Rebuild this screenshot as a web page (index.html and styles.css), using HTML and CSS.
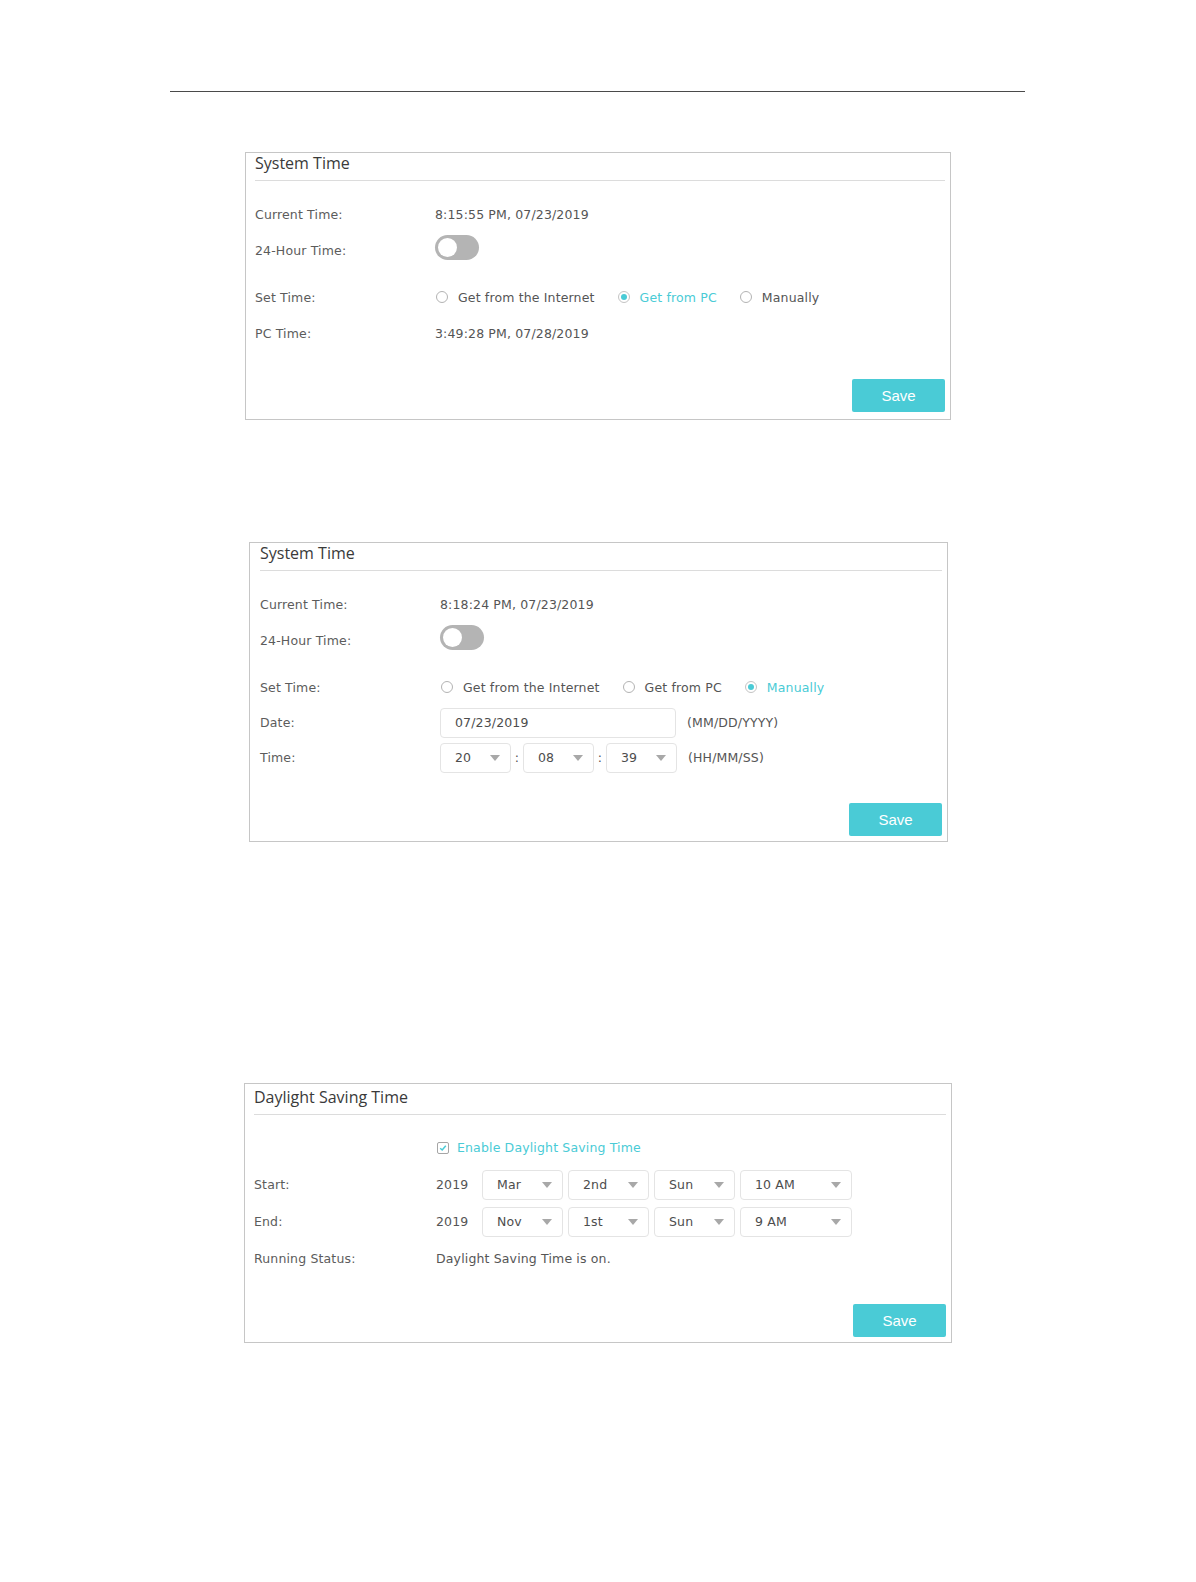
FILE: index.html
```html
<!DOCTYPE html>
<html lang="en">
<head>
  <meta charset="UTF-8">
  <meta name="viewport" content="width=device-width, initial-scale=1.0">
  <title>System Time</title>
  <link rel="stylesheet" href="styles.css">
</head>
<body>
  <div class="page">
    <hr class="page-rule">

    <!-- System Time: get from PC -->
    <section class="panel panel--pc">
      <h2 class="panel-title">System Time</h2>
      <div class="panel-body">
        <div class="row">
          <span class="label">Current Time:</span>
          <span class="value">8:15:55 PM, 07/23/2019</span>
        </div>
        <div class="row row--toggle">
          <span class="label">24-Hour Time:</span>
          <span class="toggle"><span class="knob"></span></span>
        </div>
        <div class="row">
          <span class="label">Set Time:</span>
          <div class="options">
            <span class="option"><span class="radio"></span>Get from the Internet</span>
            <span class="option is-on"><span class="radio"></span>Get from PC</span>
            <span class="option"><span class="radio"></span>Manually</span>
          </div>
        </div>
        <div class="row">
          <span class="label">PC Time:</span>
          <span class="value">3:49:28 PM, 07/28/2019</span>
        </div>
      </div>
      <div class="actions"><button class="btn-save">Save</button></div>
    </section>

    <!-- System Time: manually -->
    <section class="panel panel--manual">
      <h2 class="panel-title">System Time</h2>
      <div class="panel-body">
        <div class="row">
          <span class="label">Current Time:</span>
          <span class="value">8:18:24 PM, 07/23/2019</span>
        </div>
        <div class="row row--toggle">
          <span class="label">24-Hour Time:</span>
          <span class="toggle"><span class="knob"></span></span>
        </div>
        <div class="row">
          <span class="label">Set Time:</span>
          <div class="options">
            <span class="option"><span class="radio"></span>Get from the Internet</span>
            <span class="option"><span class="radio"></span>Get from PC</span>
            <span class="option is-on"><span class="radio"></span>Manually</span>
          </div>
        </div>
        <div class="row row--field">
          <span class="label">Date:</span>
          <span class="field field--date">07/23/2019</span>
          <span class="hint">(MM/DD/YYYY)</span>
        </div>
        <div class="row row--field">
          <span class="label">Time:</span>
          <span class="field select select--time">20</span>
          <span class="sep">:</span>
          <span class="field select select--time">08</span>
          <span class="sep">:</span>
          <span class="field select select--time">39</span>
          <span class="hint">(HH/MM/SS)</span>
        </div>
      </div>
      <div class="actions"><button class="btn-save">Save</button></div>
    </section>

    <!-- Daylight Saving Time -->
    <section class="panel panel--dst">
      <h2 class="panel-title">Daylight Saving Time</h2>
      <div class="panel-body">
        <div class="row">
          <span class="label"></span>
          <span class="option is-on">
            <span class="checkbox">
              <svg width="8" height="8" viewBox="0 0 8 8"><path d="M1.2 4.2 L3.2 6 L6.8 1.8" fill="none" stroke="#4acbd6" stroke-width="1.5"/></svg>
            </span>Enable Daylight Saving Time
          </span>
        </div>
        <div class="row">
          <span class="label">Start:</span>
          <span class="value year">2019</span>
          <div class="selects">
            <span class="field select">Mar</span>
            <span class="field select">2nd</span>
            <span class="field select">Sun</span>
            <span class="field select select--wide">10 AM</span>
          </div>
        </div>
        <div class="row">
          <span class="label">End:</span>
          <span class="value year">2019</span>
          <div class="selects">
            <span class="field select">Nov</span>
            <span class="field select">1st</span>
            <span class="field select">Sun</span>
            <span class="field select select--wide">9 AM</span>
          </div>
        </div>
        <div class="row">
          <span class="label">Running Status:</span>
          <span class="value">Daylight Saving Time is on.</span>
        </div>
      </div>
      <div class="actions"><button class="btn-save">Save</button></div>
    </section>
  </div>
</body>
</html>
```

FILE: styles.css
```css
body {
  margin: 0;
  padding: 0;
  background-color: #fff;
  font-family: "DejaVu Sans", sans-serif;
  font-size: 12.5px;
  letter-spacing: 0.15px;
  color: #555;
}
.page {
  width: 855px;
  margin-left: 170px;
  padding: 91px 0 240px;
}
.page-rule {
  margin: 0;
  border: none;
  border-top: 1px solid #4a4a4a;
}
.panel {
  box-sizing: border-box;
  border: 1px solid #c6c6c6;
  padding: 0 5px 7px 9px;
}
.panel--pc {
  margin: 60px 0 0 75px;
  width: 706px;
}
.panel--manual {
  margin: 122px 0 0 79px;
  width: 699px;
  padding-left: 10px;
  padding-bottom: 5px;
}
.panel--dst {
  margin: 241px 0 0 74px;
  width: 708px;
  padding-bottom: 5px;
}
.panel-title {
  margin: 0;
  padding-bottom: 7px;
  font-family: "Open Sans", sans-serif;
  font-size: 16px;
  font-weight: normal;
  letter-spacing: 0;
  line-height: 20px;
  color: #3a3a3a;
  border-bottom: 1px solid #dcdcdc;
}
.panel--dst .panel-title {
  padding-top: 3px;
}
.panel-body {
  padding-top: 15px;
}
.panel--dst .panel-body {
  padding-top: 14px;
}
.panel--dst .row {
  height: 37px;
}
.panel--dst .label {
  flex-basis: 182px;
}
.panel--dst .actions {
  margin-top: 27px;
}
.row {
  display: flex;
  align-items: center;
  height: 36px;
}
.row--toggle {
  margin-bottom: 11px;
}
.row--field {
  height: 35px;
}
.label {
  flex: 0 0 180px;
  color: #5c5c5c;
}
.value {
  color: #555;
}
.toggle {
  display: flex;
  align-items: center;
  box-sizing: border-box;
  width: 44px;
  height: 25px;
  padding-left: 3px;
  border-radius: 13px;
  background-color: #b4b4b4;
  margin-top: -6px;
}
.knob {
  width: 19px;
  height: 19px;
  border-radius: 50%;
  background-color: #fff;
}
.options {
  display: flex;
  gap: 22px;
}
.option {
  display: inline-flex;
  align-items: center;
  color: #555;
}
.option.is-on {
  color: #4acbd6;
}
.radio {
  display: inline-flex;
  align-items: center;
  justify-content: center;
  box-sizing: border-box;
  width: 12px;
  height: 12px;
  margin: 0 10px 0 1px;
  border: 1px solid #b3b3b3;
  border-radius: 50%;
}
.is-on .radio {
  border-color: #c4c4c4;
}
.is-on .radio::after {
  content: "";
  width: 6px;
  height: 6px;
  border-radius: 50%;
  background-color: #4acbd6;
}
.checkbox {
  display: inline-flex;
  align-items: center;
  justify-content: center;
  box-sizing: border-box;
  width: 12px;
  height: 12px;
  margin: 0 8px 0 1px;
  border: 1px solid #a6a6a6;
  border-radius: 2px;
}
.field {
  display: flex;
  align-items: center;
  box-sizing: border-box;
  height: 30px;
  padding: 0 10px 0 14px;
  border: 1px solid #e4e4e4;
  border-radius: 4px;
  background-color: #fff;
  color: #4d4d4d;
}
.field--date {
  width: 236px;
}
.select {
  justify-content: space-between;
  width: 81px;
}
.select::after {
  content: "";
  border-left: 5px solid transparent;
  border-right: 5px solid transparent;
  border-top: 6px solid #a8a8a8;
}
.select--time {
  width: 71px;
}
.select--wide {
  width: 112px;
}
.sep {
  width: 12px;
  text-align: center;
}
.hint {
  margin-left: 11px;
}
.year {
  width: 46px;
}
.selects {
  display: flex;
  gap: 5px;
}
.actions {
  display: flex;
  justify-content: flex-end;
  margin-top: 28px;
}
.btn-save {
  width: 93px;
  height: 33px;
  border: none;
  border-radius: 2px;
  background-color: #4acbd6;
  color: #fff;
  font-family: "Liberation Sans", Arial, sans-serif;
  font-size: 15px;
  letter-spacing: 0;
  cursor: pointer;
}
```
